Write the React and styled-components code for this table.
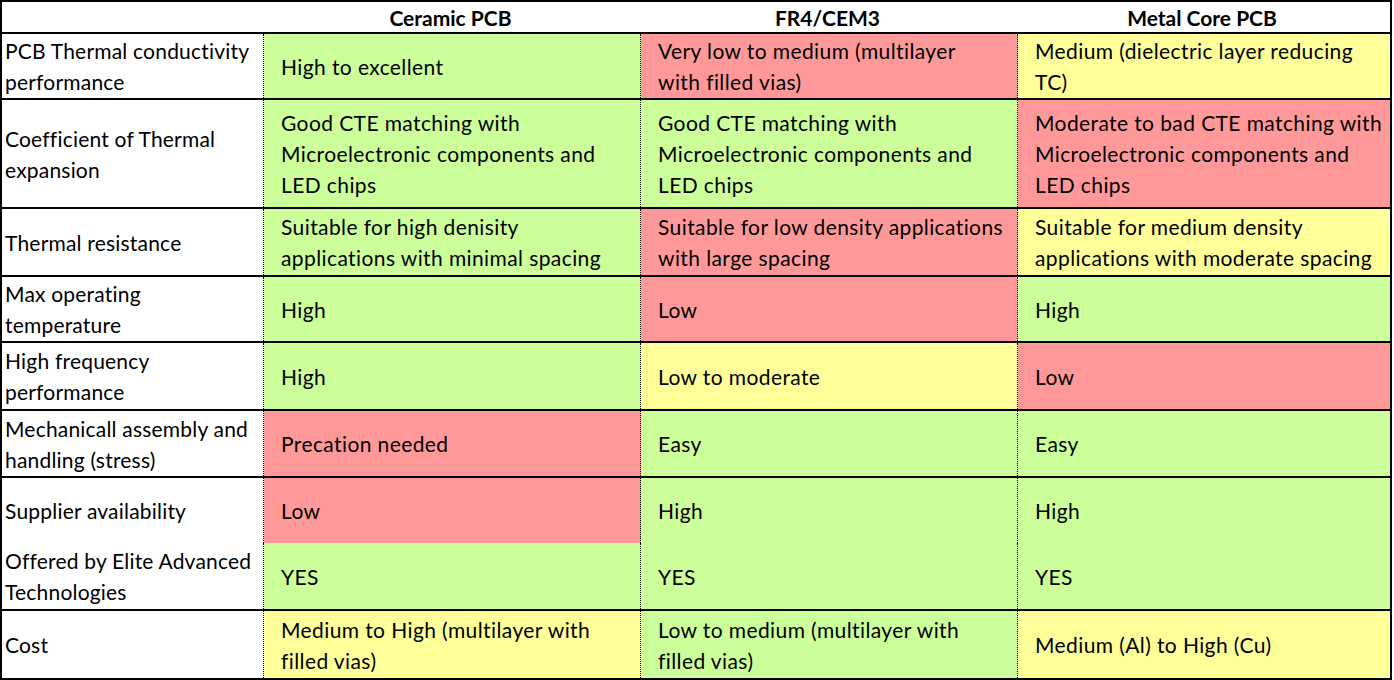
import styled, { createGlobalStyle } from 'styled-components';

const GlobalStyle = createGlobalStyle`
  html, body {
    margin: 0;
    padding: 0;
    background: #ffffff;
  }
  body {
    font-family: Lato, "Open Sans", "Liberation Sans", sans-serif;
    color: #000000;
  }
`;

const COLORS = {
  green: '#ccff99',
  red: '#ff9999',
  yellow: '#ffff99',
  white: '#ffffff',
};

const Table = styled.div`
  width: 1392px;
  height: 680px;
  box-sizing: border-box;
  border: 2px solid #000;
  display: flex;
  flex-direction: column;
  background: #fff;
`;

const Row = styled.div`
  display: grid;
  grid-template-columns: 262px 377px 377px 1fr;
  height: ${(p) => p.$h}px;
  flex: none;
  border-bottom: ${(p) => (p.$line ? '2px solid #000' : 'none')};
`;

const HeadCell = styled.div`
  display: flex;
  align-items: center;
  justify-content: center;
  padding-right: 4px;
  font-weight: 700;
  font-size: 21px;
  white-space: nowrap;
`;

const Cell = styled.div`
  display: flex;
  align-items: center;
  box-sizing: border-box;
  padding-left: ${(p) => (p.$label ? 3 : 17)}px;
  background: ${(p) => COLORS[p.$tone || 'white']};
  border-right: ${(p) => (p.$last ? 'none' : '1px dotted #000')};
  font-size: 21px;
  line-height: 31px;
  letter-spacing: ${(p) => (p.$label ? '0.2px' : '0.4px')};
  white-space: nowrap;
  overflow: hidden;
`;

const Lines = ({ text }) => (
  <div>
    {text.split('\n').map((line, i) => (
      <div key={i}>{line}</div>
    ))}
  </div>
);

const rows = [
  {
    h: 64,
    line: true,
    label: 'PCB Thermal conductivity\nperformance',
    cells: [
      ['green', 'High to excellent'],
      ['red', 'Very low to medium (multilayer\nwith filled vias)'],
      ['yellow', 'Medium (dielectric layer reducing\nTC)'],
    ],
  },
  {
    h: 107,
    line: true,
    label: 'Coefficient of Thermal\nexpansion',
    cells: [
      ['green', 'Good CTE matching with\nMicroelectronic components and\nLED chips'],
      ['green', 'Good CTE matching with\nMicroelectronic components and\nLED chips'],
      ['red', 'Moderate to bad CTE matching with\nMicroelectronic components and\nLED chips'],
    ],
  },
  {
    h: 66,
    line: true,
    label: 'Thermal resistance',
    cells: [
      ['green', 'Suitable for high denisity\napplications with minimal spacing'],
      ['red', 'Suitable for low density applications\nwith large spacing'],
      ['yellow', 'Suitable for medium density\napplications with moderate spacing'],
    ],
  },
  {
    h: 64,
    line: true,
    label: 'Max operating\ntemperature',
    cells: [
      ['green', 'High'],
      ['red', 'Low'],
      ['green', 'High'],
    ],
  },
  {
    h: 66,
    line: true,
    label: 'High frequency\nperformance',
    cells: [
      ['green', 'High'],
      ['yellow', 'Low to moderate'],
      ['red', 'Low'],
    ],
  },
  {
    h: 65,
    line: true,
    label: 'Mechanicall assembly and\nhandling (stress)',
    cells: [
      ['red', 'Precation needed'],
      ['green', 'Easy'],
      ['green', 'Easy'],
    ],
  },
  {
    h: 65,
    line: false,
    label: 'Supplier availability',
    cells: [
      ['red', 'Low'],
      ['green', 'High'],
      ['green', 'High'],
    ],
  },
  {
    h: 66,
    line: true,
    label: 'Offered by Elite Advanced\nTechnologies',
    cells: [
      ['green', 'YES'],
      ['green', 'YES'],
      ['green', 'YES'],
    ],
  },
  {
    h: 67,
    line: false,
    label: 'Cost',
    cells: [
      ['yellow', 'Medium to High (multilayer with\nfilled vias)'],
      ['green', 'Low to medium (multilayer with\nfilled vias)'],
      ['yellow', 'Medium (Al) to High (Cu)'],
    ],
  },
];

export default function App() {
  return (
    <>
      <GlobalStyle />
      <Table>
        <Row $h={30} $line>
          <HeadCell />
          <HeadCell>Ceramic PCB</HeadCell>
          <HeadCell>FR4/CEM3</HeadCell>
          <HeadCell>Metal Core PCB</HeadCell>
        </Row>
        {rows.map((r, i) => (
          <Row key={i} $h={r.h} $line={r.line}>
            <Cell $label>
              <Lines text={r.label} />
            </Cell>
            {r.cells.map(([tone, text], j) => (
              <Cell key={j} $tone={tone} $last={j === 2}>
                <Lines text={text} />
              </Cell>
            ))}
          </Row>
        ))}
      </Table>
    </>
  );
}
